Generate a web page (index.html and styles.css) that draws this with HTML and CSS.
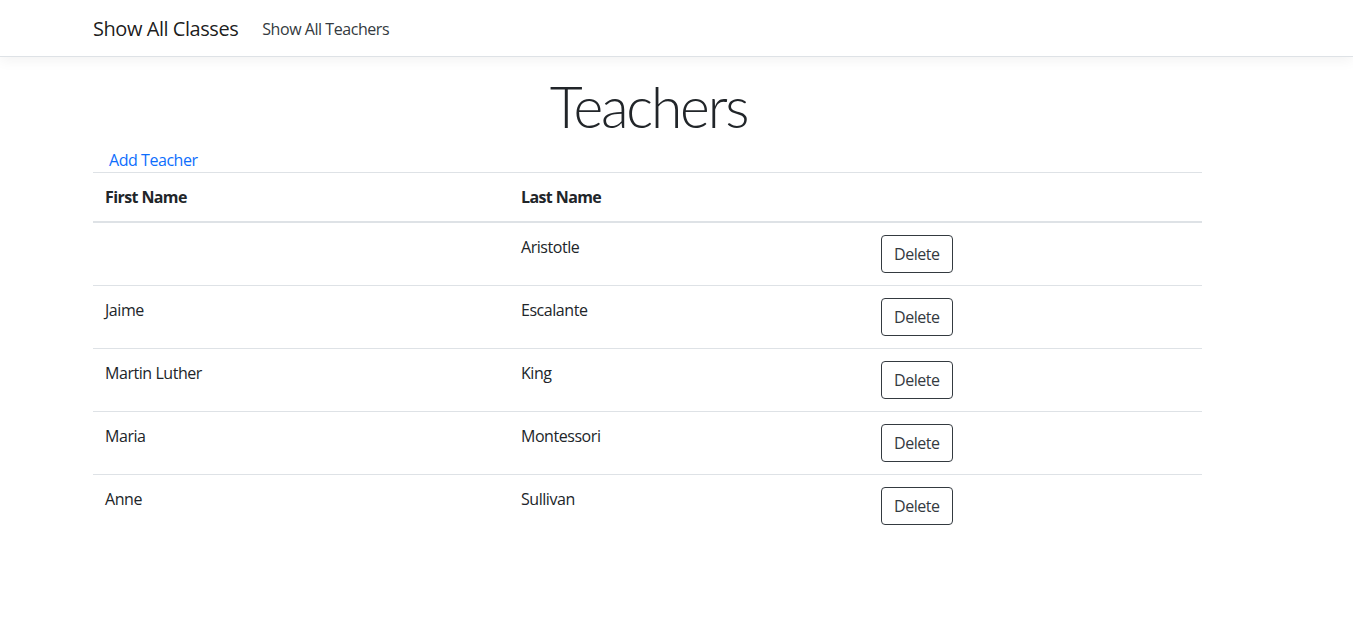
FILE: index.html
```html
<!DOCTYPE html>
<html lang="en">
<head>
<meta charset="utf-8">
<title>Teachers</title>
<link rel="stylesheet" href="styles.css">
</head>
<body>
<header class="navbar">
  <div class="container nav-inner">
    <a class="brand" href="#">Show All Classes</a>
    <a class="nav-link" href="#">Show All Teachers</a>
  </div>
</header>
<main class="container">
  <h1 class="display">Teachers</h1>
  <a class="add-link" href="#">Add Teacher</a>
  <table class="table">
    <thead>
      <tr><th class="c1">First Name</th><th class="c2">Last Name</th><th class="c3"></th></tr>
    </thead>
    <tbody>
      <tr><td></td><td>Aristotle</td><td><button class="btn">Delete</button></td></tr>
      <tr><td>Jaime</td><td>Escalante</td><td><button class="btn">Delete</button></td></tr>
      <tr><td>Martin Luther</td><td>King</td><td><button class="btn">Delete</button></td></tr>
      <tr><td>Maria</td><td>Montessori</td><td><button class="btn">Delete</button></td></tr>
      <tr><td>Anne</td><td>Sullivan</td><td><button class="btn">Delete</button></td></tr>
    </tbody>
  </table>
</main>
</body>
</html>
```
FILE: styles.css
```css
* { box-sizing: border-box; }
html, body { margin: 0; padding: 0; }
body {
  font-family: "Open Sans", "Noto Sans", sans-serif;
  font-size: 16px;
  line-height: 1.5;
  letter-spacing: -0.45px;
  color: #212529;
  background: #fff;
}
a { text-decoration: none; }
.container {
  width: 1109px;
  margin-left: 93px;
}
.navbar {
  height: 57px;
  border-bottom: 1px solid #dee2e6;
  box-shadow: 0 4px 12px rgba(0, 0, 0, 0.05);
  margin-bottom: 16px;
  background: #fff;
}
.nav-inner {
  display: flex;
  align-items: center;
  height: 56px;
  padding-top: 2px;
}
.brand {
  font-size: 20px;
  line-height: 30px;
  color: rgba(0, 0, 0, 0.9);
  margin-right: 16px;
  letter-spacing: -0.45px;
}
.nav-link {
  font-size: 16px;
  padding: 8px;
  color: #343a40;
}
.display {
  margin: 0 0 8px;
  padding-left: 2px;
  font-family: "Lato", "Open Sans", sans-serif;
  font-size: 57px;
  font-weight: 300;
  line-height: 67px;
  letter-spacing: -2.2px;
  text-align: center;
  color: #212529;
}
.add-link {
  display: block;
  padding-left: 16px;
  line-height: 24px;
  color: #0d6efd;
}
.table {
  width: 100%;
  border-collapse: collapse;
}
.table th, .table td {
  padding: 12px;
  text-align: left;
  vertical-align: top;
  border-top: 1px solid #dee2e6;
}
.table thead th {
  font-weight: 700;
  letter-spacing: -0.6px;
  border-bottom: 2px solid #dee2e6;
}
.c1 { width: 416px; }
.c2 { width: 360px; }
.btn {
  font-family: inherit;
  font-size: 16px;
  line-height: 24px;
  letter-spacing: -0.45px;
  padding: 6px 12px;
  color: #343a40;
  background: transparent;
  border: 1px solid #343a40;
  border-radius: 4px;
  cursor: pointer;
}
```
